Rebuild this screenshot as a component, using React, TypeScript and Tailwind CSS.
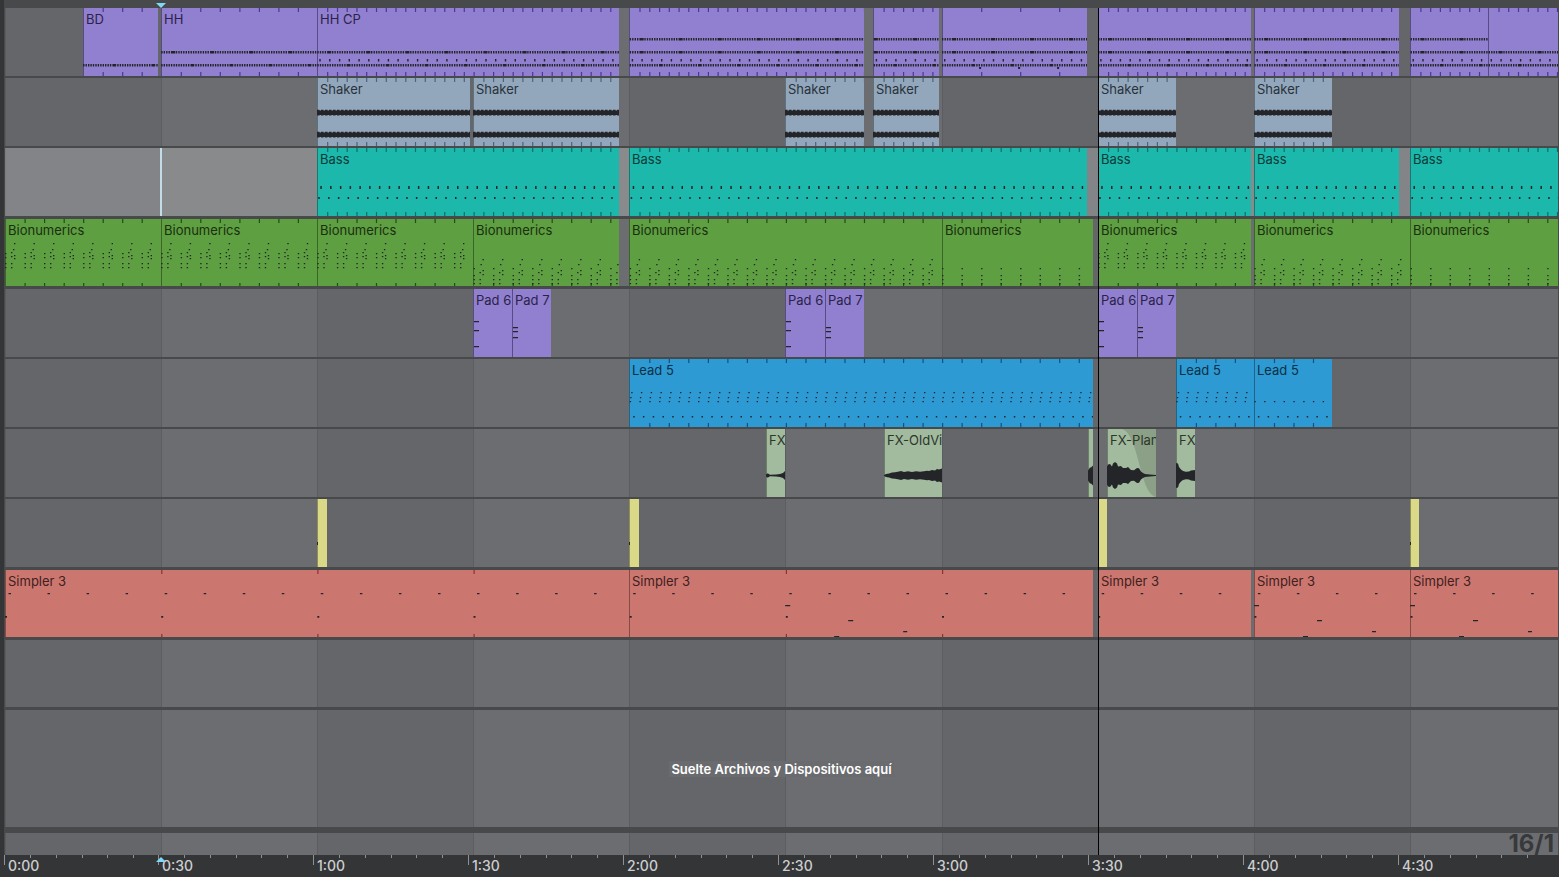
import type { ReactNode } from 'react';
import clsx from 'clsx';

// one section of the arrangement grid, in px at the default zoom
const SECTION = 156.17;
const CLIP_HEIGHT = 68;
const WAVE_CENTER = 46.5;

type Kind = 'drums' | 'shaker' | 'bass' | 'keys' | 'pad' | 'lead' | 'fx' | 'hit' | 'simpler';

interface Clip {
    from: number;
    to: number;
    name?: string;
    pattern?: string;
    grid?: number;
}

interface Track {
    kind: Kind;
    rowClass: string;
    selected?: boolean;
    clips: Clip[];
}

const clipColor: Record<Kind, string> = {
    drums: 'bg-[#9180cf] text-[#2b2347]',
    shaker: 'bg-[#92a7bb] text-[#29323b]',
    bass: 'bg-[#1db8ac] text-[#0b3b37]',
    keys: 'bg-[#5e9f41] text-[#1a3010]',
    pad: 'bg-[#9180cf] text-[#2b2347]',
    lead: 'bg-[#2e9ad3] text-[#0c3045]',
    fx: 'bg-[#a2bb9f] text-[#2c362b]',
    hit: 'bg-[#dad987] text-black',
    simpler: 'bg-[#cb7770] text-[#41201e]',
};

const edgeColor: Record<Kind, string> = {
    drums: '#594b86',
    shaker: '#5f7080',
    bass: '#157a72',
    keys: '#3a6728',
    pad: '#594b86',
    lead: '#1f658a',
    fx: '#6c8069',
    hit: '#8f8e55',
    simpler: '#854b47',
};

const tickColor: Record<Kind, string> = {
    drums: '#4c369b',
    shaker: '#4e637c',
    bass: '#0d6f66',
    keys: '#1c5212',
    pad: '#4c369b',
    lead: '#0d528c',
    fx: '#4c7a4c',
    hit: '#77763f',
    simpler: '#92302e',
};

const tracks: Track[] = [
    {
        kind: 'drums',
        rowClass: 'h-[70px] border-b-2',
        clips: [
            { from: 78, to: 153, name: 'BD', pattern: 'bd', grid: 8 },
            { from: 156, to: 312, name: 'HH', pattern: 'bd hh', grid: 8 },
            { from: 312, to: 614, name: 'HH CP', pattern: 'bd hh cp', grid: 16 },
            { from: 624, to: 859, pattern: 'bd hh cp oh', grid: 16 },
            { from: 868, to: 934, pattern: 'bd hh cp oh', grid: 16 },
            { from: 937, to: 1082, pattern: 'bd hh cp oh fill', grid: 4 },
            { from: 1093, to: 1246, pattern: 'bd hh cp oh', grid: 16 },
            { from: 1249, to: 1394, pattern: 'bd hh cp oh', grid: 16 },
            { from: 1405, to: 1483, pattern: 'bd hh cp oh', grid: 16 },
            { from: 1483, to: 1561, pattern: 'bd hh cp', grid: 16 },
        ],
    },
    {
        kind: 'shaker',
        rowClass: 'h-[70px] border-b-2',
        clips: [
            { from: 312, to: 465, name: 'Shaker', grid: 16 },
            { from: 468, to: 614, name: 'Shaker', grid: 16 },
            { from: 780, to: 859, name: 'Shaker', grid: 16 },
            { from: 868, to: 934, name: 'Shaker', grid: 16 },
            { from: 1093, to: 1171, name: 'Shaker', grid: 16 },
            { from: 1249, to: 1327, name: 'Shaker', grid: 16 },
        ],
    },
    {
        kind: 'bass',
        rowClass: 'h-[71px] border-b-3',
        selected: true,
        clips: [
            { from: 312, to: 614, name: 'Bass', grid: 16 },
            { from: 624, to: 1082, name: 'Bass', grid: 16 },
            { from: 1093, to: 1246, name: 'Bass', grid: 16 },
            { from: 1249, to: 1394, name: 'Bass', grid: 16 },
            { from: 1405, to: 1561, name: 'Bass', grid: 16 },
        ],
    },
    {
        kind: 'keys',
        rowClass: 'h-[70px] border-b-3',
        clips: [
            { from: 0, to: 156, name: 'Bionumerics', pattern: 'high', grid: 8 },
            { from: 156, to: 312, name: 'Bionumerics', pattern: 'high', grid: 8 },
            { from: 312, to: 468, name: 'Bionumerics', pattern: 'high', grid: 8 },
            { from: 468, to: 614, name: 'Bionumerics', pattern: 'low', grid: 8 },
            { from: 624, to: 937, name: 'Bionumerics', pattern: 'low', grid: 8 },
            { from: 937, to: 1088, name: 'Bionumerics', pattern: 'sparse', grid: 8 },
            { from: 1093, to: 1246, name: 'Bionumerics', pattern: 'high', grid: 8 },
            { from: 1249, to: 1405, name: 'Bionumerics', pattern: 'low', grid: 8 },
            { from: 1405, to: 1561, name: 'Bionumerics', pattern: 'sparse', grid: 8 },
        ],
    },
    {
        kind: 'pad',
        rowClass: 'h-[70px] border-b-2',
        clips: [
            { from: 468, to: 507, name: 'Pad 6', pattern: 'a' },
            { from: 507, to: 546, name: 'Pad 7', pattern: 'b' },
            { from: 780, to: 820, name: 'Pad 6', pattern: 'a' },
            { from: 820, to: 859, name: 'Pad 7', pattern: 'b' },
            { from: 1093, to: 1132, name: 'Pad 6', pattern: 'a' },
            { from: 1132, to: 1171, name: 'Pad 7', pattern: 'b' },
        ],
    },
    {
        kind: 'lead',
        rowClass: 'h-[70px] border-b-2',
        clips: [
            { from: 624, to: 1088, name: 'Lead 5', pattern: 'full', grid: 8 },
            { from: 1171, to: 1249, name: 'Lead 5', pattern: 'full', grid: 8 },
            { from: 1249, to: 1327, name: 'Lead 5', pattern: 'thin', grid: 8 },
        ],
    },
    {
        kind: 'fx',
        rowClass: 'h-[70px] border-b-2',
        clips: [
            { from: 761, to: 780, name: 'FX', pattern: 'swell' },
            { from: 879, to: 937, name: 'FX-OldVi', pattern: 'vinyl' },
            { from: 1083, to: 1088, pattern: 'blip' },
            { from: 1102, to: 1151, name: 'FX-Plan', pattern: 'planet' },
            { from: 1171, to: 1190, name: 'FX', pattern: 'drop' },
        ],
    },
    {
        kind: 'hit',
        rowClass: 'h-[71px] border-b-3',
        clips: [
            { from: 312, to: 322 },
            { from: 624, to: 634 },
            { from: 1093, to: 1102 },
            { from: 1405, to: 1414 },
        ],
    },
    {
        kind: 'simpler',
        rowClass: 'h-[70px] border-b-3',
        clips: [
            { from: 0, to: 624, name: 'Simpler 3', grid: 1 },
            { from: 624, to: 1088, name: 'Simpler 3', pattern: 'late', grid: 1 },
            { from: 1093, to: 1246, name: 'Simpler 3', grid: 1 },
            { from: 1249, to: 1405, name: 'Simpler 3', pattern: 'fill', grid: 1 },
            { from: 1405, to: 1561, name: 'Simpler 3', pattern: 'fill', grid: 1 },
        ],
    },
];

// every grid position of the given step that falls inside the clip, relative to its start
const steps = (clip: Clip, step: number, offset = 0) => {
    const out: number[] = [];
    for (let k = Math.floor(clip.from / step) - 1; k * step + offset < clip.to; k++) {
        const x = k * step + offset - clip.from;
        if (x > -1) out.push(x);
    }
    return out;
};

const dots = (xs: number[], y: number, w: number, h: number) =>
    xs.map((x) => `M${x.toFixed(1)} ${y}h${w}v${h}h-${w}z`).join('');

const keyNotes: Record<string, [number, number[]][]> = {
    high: [[0, [34, 38, 44, 48]], [6, [33, 37, 44, 48]], [8, [30]], [9, [24, 36, 39]]],
    low: [[0, [49, 56, 60, 64]], [6, [53, 60, 64]], [7, [45]], [9, [40, 51, 55]]],
    sparse: [[0, [49, 56, 60, 64]]],
};

// waveform envelopes as [x, half height]
const waves: Record<string, [number, number][]> = {
    swell: [[0, 1], [1, 2], [2, 2], [4, 0.7], [10, 1], [14, 1.6], [17, 2.6], [19, 4.5]],
    vinyl: [[0, 0.5], [2, 1.4], [5, 2], [8, 3], [11, 3.2], [15, 4], [17, 4.4], [20, 3.6], [24, 4.2], [28, 3.6], [32, 4.3], [36, 3.8], [40, 4.2], [43, 4.8], [45, 4.4], [48, 5.4], [51, 5], [53, 6.4], [55, 6], [58, 7]],
    blip: [[0, 5], [2, 8], [3, 8], [5, 10]],
    planet: [[0, 9], [1, 11], [3, 11.5], [5, 9], [6, 12], [8, 13.5], [10, 12], [11, 9], [14, 9.5], [16, 7.5], [19, 7.5], [21, 8.5], [24, 5.5], [27, 5.2], [30, 7.5], [32, 7.2], [34, 4], [36, 2.6], [38, 1.4], [43, 0.9], [49, 0.6]],
    drop: [[0, 12.5], [2, 12], [3, 8.5], [5, 6], [7, 4.4], [10, 3.8], [13, 4], [15, 5], [19, 5.5]],
};

const wavePath = (points: [number, number][]) => {
    const top = points.map(([x, h]) => `${x} ${WAVE_CENTER - h}`);
    const bottom = [...points].reverse().map(([x, h]) => `${x} ${WAVE_CENTER + h}`);
    return `M${[...top, ...bottom].join('L')}z`;
};

const notesPath = (kind: Kind, clip: Clip) => {
    const has = (name: string) => (clip.pattern ?? '').split(' ').includes(name);
    const roll = (y: number, accent = 11) =>
        dots(steps(clip, SECTION / 64), y, 1.4, 2.6) + dots(steps(clip, SECTION / 4, accent), y, 3, 2.6);
    let d = '';
    if (kind === 'drums') {
        if (has('oh')) d += roll(30);
        if (has('hh')) d += roll(43);
        if (has('cp')) d += dots(steps(clip, SECTION / 16, 2), 51, 1.4, 2.5);
        if (has('bd')) d += roll(56, 30);
        if (has('fill')) d += dots(steps(clip, SECTION / 4, -2), 59, 2, 2);
    }
    if (kind === 'shaker') {
        for (const y of [32, 54]) {
            d += `M0 ${y + 0.4}h${clip.to - clip.from}v4.6h-${clip.to - clip.from}z`;
            d += dots(steps(clip, 4), y - 0.2, 2.5, 5.8);
        }
    }
    if (kind === 'bass') {
        d = dots(steps(clip, SECTION / 16, 3), 38, 1.5, 3) + dots(steps(clip, SECTION / 16, 1), 49, 1.5, 2);
    }
    if (kind === 'keys') {
        for (const [offset, ys] of keyNotes[clip.pattern ?? 'sparse']) {
            for (const y of ys) d += dots(steps(clip, SECTION / 8, offset), y, 1.4, 1.2);
        }
    }
    if (kind === 'pad') {
        for (const y of has('a') ? [32, 41, 57] : [38, 42, 48]) d += dots([1], y, 5, 1.3);
    }
    if (kind === 'lead') {
        if (has('full')) d += dots(steps(clip, SECTION / 16, 1.5), 33, 1.4, 1.3) + dots(steps(clip, SECTION / 16, 0.5), 38, 1.4, 1.2);
        d += dots(steps(clip, SECTION / 16), 42, 1.4, 1.2) + dots(steps(clip, SECTION / 16, 3.5), 57, 1.5, 1.5);
    }
    if (kind === 'fx') d = wavePath(waves[clip.pattern ?? 'blip']);
    if (kind === 'hit') d = dots([0], 43, 1, 3);
    if (kind === 'simpler') {
        d = dots(steps(clip, SECTION / 4, 3.5), 23, 2.5, 1.2) + dots(steps(clip, SECTION), 46, 2, 1.8);
        if (has('late') || has('fill')) {
            const x = has('late') ? SECTION : 0;
            d += dots([x], 35, 5, 1.2) + dots([x + 63], 50, 5, 1.3) + dots([x + 118], 61, 4, 1.2) + dots([x + 49], 66, 5, 1);
        }
    }
    return d;
};

const ClipNotes = ({ kind, clip }: { kind: Kind; clip: Clip }) => {
    const width = clip.to - clip.from;
    const ticks = clip.grid ? steps(clip, SECTION / clip.grid).filter((x) => x > 2) : [];
    return (
        <svg className="absolute top-0 left-0" width={width} height={CLIP_HEIGHT} aria-hidden="true">
            {clip.pattern === 'planet' && <path d="M14 0c18 2 18 64 35 68V0z" fill="#8ba086" />}
            <path d={`M0 0h1v${CLIP_HEIGHT}H0z`} fill={edgeColor[kind]} />
            <path d={dots(ticks, 0, 1.2, 4) + dots(ticks, 64, 1.2, 4)} fill={tickColor[kind]} />
            <path d={notesPath(kind, clip)} fill="#242529" />
        </svg>
    );
};

const ClipBlock = ({ kind, clip, gap }: { kind: Kind; clip: Clip; gap: number }) => (
    <div
        className={clsx('relative h-full shrink-0 overflow-hidden', clipColor[kind])}
        style={{ width: clip.to - clip.from, marginLeft: gap }}
    >
        <ClipNotes kind={kind} clip={clip} />
        {clip.name && (
            <span className="relative block pt-[3px] pl-[3px] text-[13px] leading-4 whitespace-nowrap">{clip.name}</span>
        )}
    </div>
);

const TrackRow = ({ track }: { track: Track }) => (
    <div
        className={clsx(
            'relative flex shrink-0 overflow-hidden border-[#48494b]',
            track.rowClass,
            track.selected && 'bg-white/20',
        )}
    >
        {track.clips.map((clip, i) => (
            <ClipBlock
                key={clip.from}
                kind={track.kind}
                clip={clip}
                gap={clip.from - (i > 0 ? track.clips[i - 1].to : 0)}
            />
        ))}
        {track.selected && <div className="absolute inset-y-0 left-[155px] w-0.5 bg-[#c3dde8]" />}
    </div>
);

const GridSections = () => (
    <div className="absolute inset-0 flex overflow-hidden">
        {Array.from({ length: 24 }, (_, i) => (
            <div
                key={i}
                className={clsx('shrink-0 border-l border-[#5c5d60]', i % 2 ? 'bg-[#6c6d70]' : 'bg-[#656669]')}
                style={{ width: Math.floor((i + 1) * SECTION) - Math.floor(i * SECTION) }}
            />
        ))}
    </div>
);

const Marker = ({ className, children }: { className: string; children: ReactNode }) => (
    <svg className={clsx('absolute', className)} width="10" height="5" fill="#7fd9f8" aria-hidden="true">
        {children}
    </svg>
);

const times = ['0:00', '0:30', '1:00', '1:30', '2:00', '2:30', '3:00', '3:30', '4:00', '4:30'];

const TimeRuler = () => (
    <div className="relative flex h-[22px] shrink-0 overflow-hidden bg-[#343537]">
        {times.map((time, i) => (
            <div
                key={time}
                className="relative shrink-0"
                style={{ width: Math.floor((i + 1) * 154.9) - Math.floor(i * 154.9) }}
            >
                <svg className="absolute top-0 left-0" width="155" height="10" fill="#8f9092" aria-hidden="true">
                    <path d="M0 0h1v10H0zM26 0h1v3h-1zM52 0h1v3h-1zM78 0h1v3h-1zM103 0h1v3h-1zM129 0h1v3h-1z" />
                </svg>
                <span className="block pt-[3px] pl-1 text-[14px] leading-4 font-medium text-[#cdced0]">{time}</span>
            </div>
        ))}
        <Marker className="top-0.5 left-[152px]">
            <path d="M5 0l5 5H0z" />
        </Marker>
    </div>
);

const App = () => {
    return (
        <main className="flex min-h-screen flex-col border-l-4 border-[#343537] bg-[#48494b] font-['Inter','Noto_Sans',sans-serif]">
            <div className="relative h-2 shrink-0">
                <Marker className="top-[3px] left-[152px]">
                    <path d="M0 0h10L5 5z" />
                </Marker>
            </div>

            <div className="relative mx-px flex flex-1 flex-col">
                <GridSections />
                {tracks.map((track) => (
                    <TrackRow key={track.kind} track={track} />
                ))}
                <div className="relative h-[70px] shrink-0 border-b-3 border-[#48494b]" />
                <div className="relative flex min-h-[120px] flex-1 items-center justify-center border-b-6 border-[#48494b]">
                    <p className="bg-[#6a6b6e] px-0.5 text-[13px] leading-4 font-semibold text-white">
                        Suelte Archivos y Dispositivos aquí
                    </p>
                </div>
                <div className="relative flex h-[22px] shrink-0 items-center justify-end pr-1">
                    <span className="text-2xl leading-5 font-bold text-[#38393b]">16/1</span>
                </div>
                {/* playhead */}
                <div className="absolute inset-y-0 left-[1093px] w-px bg-black" />
            </div>

            <TimeRuler />
        </main>
    );
};

export default App;
